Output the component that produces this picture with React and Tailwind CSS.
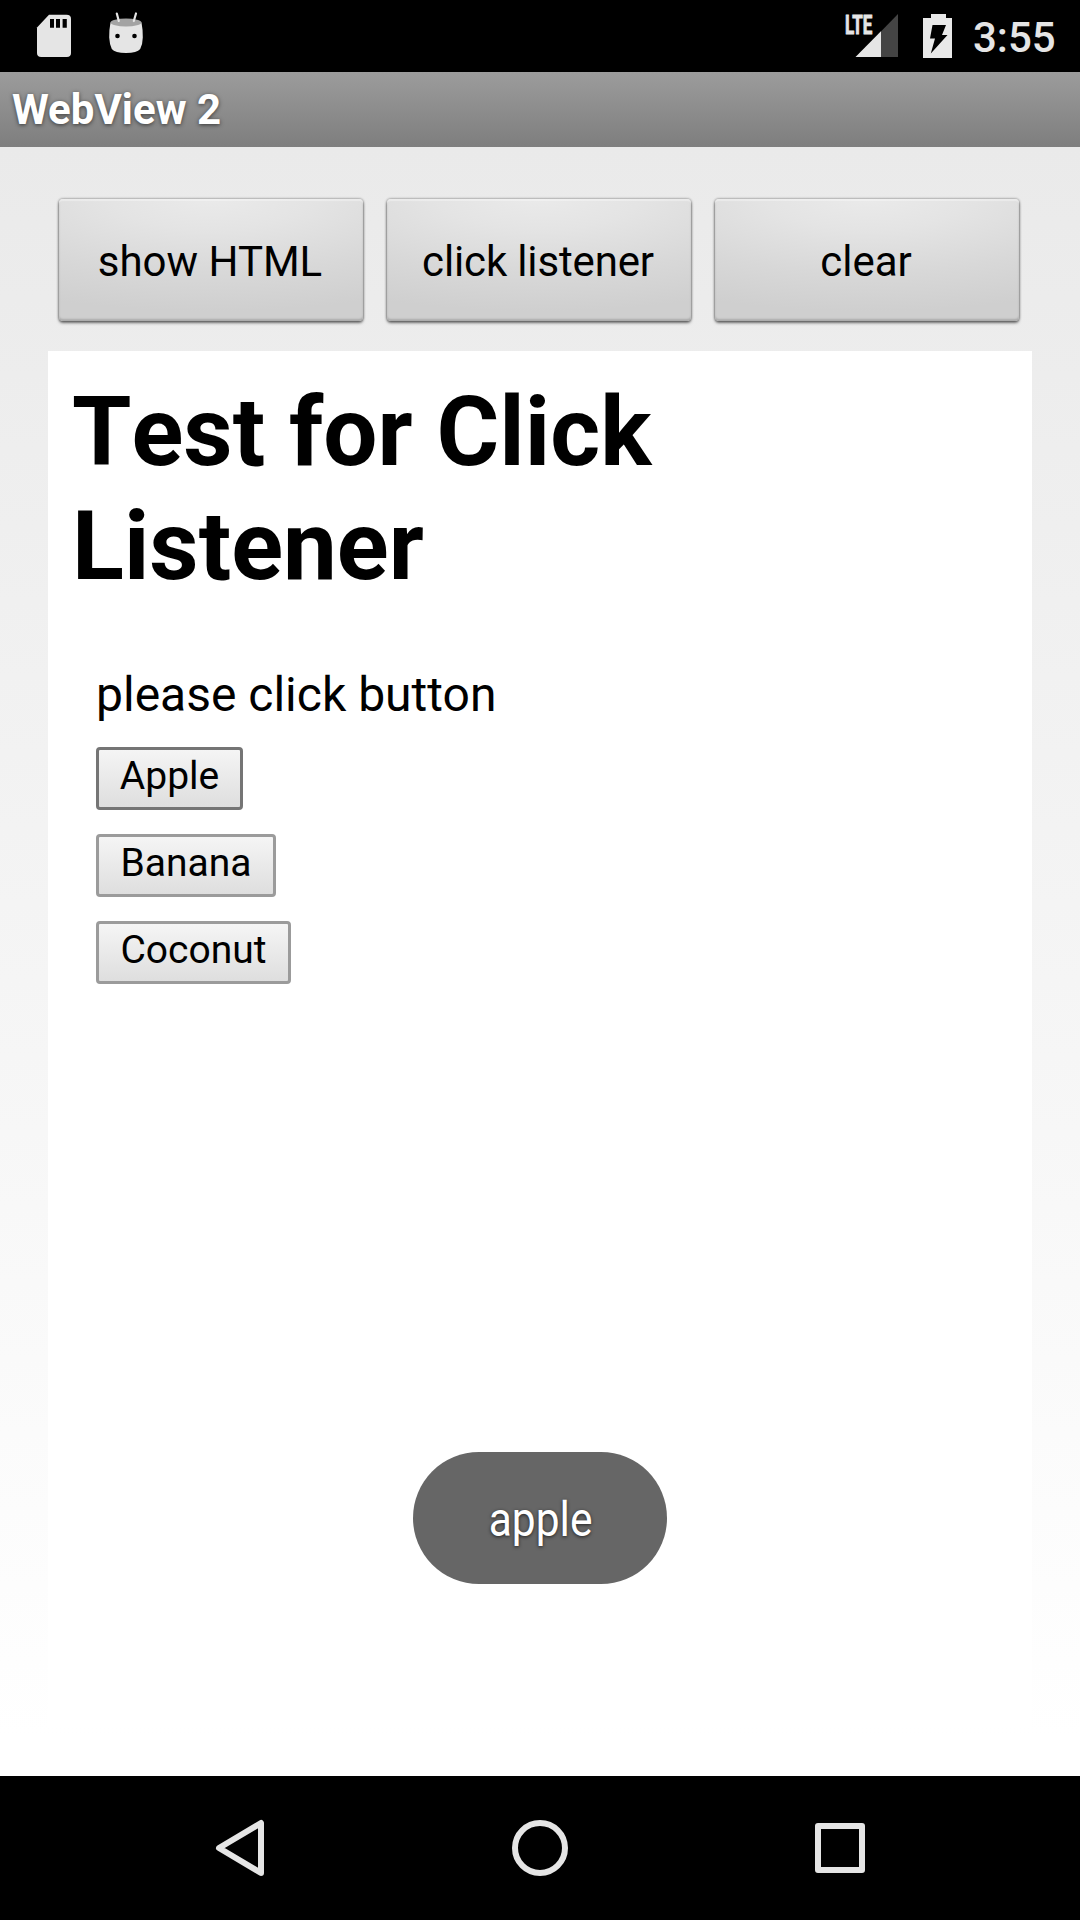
function StatusBar() {
  return (
    <header className="flex h-[72px] items-start bg-black text-[#e5e5e5]">
      <svg className="ml-[36px] mt-[14px] h-[44px] w-[36px]" viewBox="0 0 36 44">
        <path fill="#e5e5e5" d="M13 .8h17.500Q35 .8 35 5v34q0 4-4.200 4H5.200Q1 43 1 39V13.500z" />
        <path fill="#000" d="M14 5h4v8.700h-4zM20 5h4v8.700h-4zM26.600 5h4.200v8.700h-4.200z" />
      </svg>
      <svg className="ml-[36px] mt-[12px] h-[42px] w-[36px]" viewBox="0 0 36 42">
        <path fill="#e5e5e5" d="M2.500 10.500Q1 18 1.200 25.500q.3 6.500 2.600 11.500Q7 41 18 41t14.200-4q2.500-5 2.600-11.500Q35 18 33.500 10.500z" />
        <ellipse cx="18" cy="10.500" rx="15.500" ry="4" fill="#a3a3a3" />
        <path stroke="#e5e5e5" strokeWidth="2.200" strokeLinecap="round" d="M8.800 1.500 10.800 9M28 1.500 25.800 9" />
        <circle cx="9.500" cy="24" r="2.300" fill="#000" />
        <circle cx="26.500" cy="24" r="2.300" fill="#000" />
      </svg>
      <svg className="ml-auto mt-[8px] h-[52px] w-[54px] overflow-visible" viewBox="0 -4 54 52">
        <path fill="#444" d="M53 2v43H11z" />
        <path fill="#e5e5e5" d="M36 19.300V45H10.500z" />
        <text x="0" y="21.500" fontFamily="Roboto" fontWeight="700" fontSize="26" textLength="42" lengthAdjust="spacingAndGlyphs" fill="#e5e5e5" stroke="#e5e5e5" strokeWidth=".9" transform="scale(.65 1)">LTE</text>
      </svg>
      <svg className="ml-[24px] mt-[14px] h-[44px] w-[30px]" viewBox="0 0 30 44">
        <path fill="#e9e9e9" d="M8 0h15v4h6v40H0V4h8z" />
        <path fill="#000" d="M9.500 11H23l-4 10h5.500L7.800 39.500 12 24.500H7z" />
      </svg>
      <span className="ml-[20px] mr-[25px] mt-[12.500px] w-[82px] whitespace-nowrap text-[42px] leading-[50px] font-medium">3:55</span>
    </header>
  );
}

function PanelButton({ children, tracking }) {
  return (
    <button className={`${tracking} h-[122px] flex-1 rounded-[4px] bg-[radial-gradient(ellipse_130%_100%_at_50%_0%,#eaeaea_0%,#e4e4e4_25%,#d8d8d8_60%,#cfcfcf_92%)] pt-[3px] pr-[2px] text-[42px] leading-[50px] text-black shadow-[0_0_2px_1px_rgba(0,0,0,0.24),0_2px_3px_rgba(0,0,0,0.5),inset_0_2px_1px_rgba(255,255,255,0.35),inset_0_-2px_2px_rgba(0,0,0,0.18)]`}>
      {children}
    </button>
  );
}

function HtmlButton({ children, size, border }) {
  return (
    <button className={`${size} ${border} flex h-[63px] justify-center rounded-[4px] border-[3px] bg-gradient-to-b from-[#f6f6f6] to-[#dddddd] pt-[3px] text-[39px] leading-[47px] text-black [background-origin:border-box]`}>
      {children}
    </button>
  );
}

export default function App() {
  return (
    <div className="relative flex h-[1920px] w-[1080px] flex-col overflow-hidden font-[Roboto,sans-serif]">
      <StatusBar />
      <div className="flex h-[75px] items-center bg-gradient-to-b from-[#9c9c9c] to-[#7e7e7e] pl-[12px]">
        <h1 className="text-[42px] leading-[50px] font-bold text-white [text-shadow:0_1px_4px_rgba(0,0,0,0.6)]">WebView 2</h1>
      </div>
      <main className="flex flex-1 flex-col bg-[linear-gradient(to_bottom,#eaeaea_0px,#ffffff_1590px)] px-[48px] pb-[48px]">
        <div className="flex gap-[24px] pr-[13px] pl-[11px] pt-[52px] pb-[30px]">
          <PanelButton tracking="tracking-normal">show HTML</PanelButton>
          <PanelButton tracking="tracking-[-0.15px]">click listener</PanelButton>
          <PanelButton tracking="tracking-normal">clear</PanelButton>
        </div>
        <section className="flex-1 bg-white p-[24px] text-black">
          <h2 className="text-[96px] leading-[114px] font-bold [font-kerning:none]">Test for Click<br />Listener</h2>
          <div className="mt-[63px] flex flex-col items-start gap-[24px] pl-[24px]">
            <p className="text-[48px] leading-[57px]">please click button</p>
            <HtmlButton size="w-[147px]" border="border-[#757575]">Apple</HtmlButton>
            <HtmlButton size="w-[180px]" border="border-[#9b9b9b]">Banana</HtmlButton>
            <HtmlButton size="w-[195px]" border="border-[#9b9b9b]">Coconut</HtmlButton>
          </div>
        </section>
      </main>
      <nav className="flex h-[144px] items-center justify-center gap-[244px] bg-black">
        <svg className="h-[60px] w-[56px]" viewBox="0 0 56 60" fill="none" stroke="#e5e5e5" strokeWidth="6" strokeLinejoin="round">
          <path d="M49 5v50L7 30z" />
        </svg>
        <svg className="h-[60px] w-[56px]" viewBox="0 0 56 60" fill="none" stroke="#e5e5e5" strokeWidth="6">
          <circle cx="28" cy="30" r="25" />
        </svg>
        <svg className="h-[60px] w-[56px]" viewBox="0 0 56 60" fill="none" stroke="#e5e5e5" strokeWidth="6" strokeLinejoin="round">
          <path d="M6 8h44v44H6z" />
        </svg>
      </nav>
      <div className="absolute top-[1452px] left-[413px] flex h-[132px] w-[254px] items-center justify-center rounded-full bg-[#666666]">
        <span className="mt-[3px] ml-[2px] inline-block scale-x-[0.885] text-[48px] leading-[57px] text-white [text-shadow:0_1px_4px_rgba(0,0,0,0.7)]">apple</span>
      </div>
    </div>
  );
}
